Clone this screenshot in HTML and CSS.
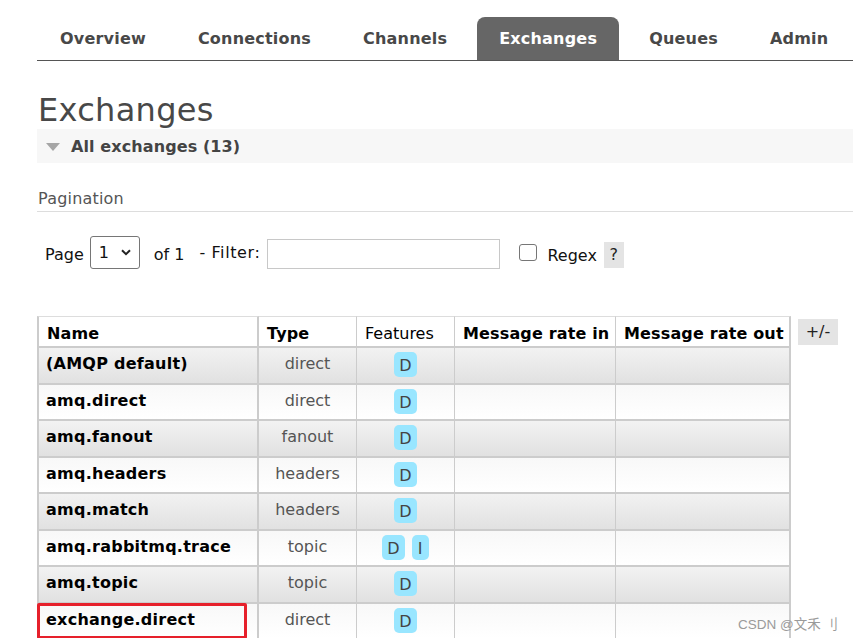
FILE: index.html
```html
<!DOCTYPE html>
<html lang="en">
<head>
<meta charset="utf-8">
<title>Exchanges</title>
<link rel="stylesheet" href="styles.css">
</head>
<body>
<div class="page">
  <ul class="tabs">
    <li class="tab">Overview</li>
    <li class="tab">Connections</li>
    <li class="tab">Channels</li>
    <li class="tab active">Exchanges</li>
    <li class="tab">Queues</li>
    <li class="tab">Admin</li>
  </ul>

  <h1 class="title">Exchanges</h1>

  <div class="section-bar"><span class="tri"></span><span>All exchanges (13)</span></div>

  <h3 class="subhead">Pagination</h3>

  <div class="pager">
    <span class="lbl">Page</span>
    <div class="select"><span class="sel-val">1</span><svg class="chev" width="10" height="7" viewBox="0 0 10 7"><path d="M1 1.2 L5 5.2 L9 1.2" fill="none" stroke="#222" stroke-width="2"/></svg></div>
    <span class="lbl of">of 1</span>
    <span class="lbl filter">- Filter:</span>
    <input class="filter-input" type="text">
    <span class="checkbox"></span>
    <span class="lbl regex">Regex</span>
    <span class="help">?</span>
  </div>

  <div class="table-wrap">
    <table class="list">
      <thead>
        <tr>
          <th class="c-name">Name</th>
          <th class="c-type">Type</th>
          <th class="c-feat plain">Features</th>
          <th class="c-in">Message rate in</th>
          <th class="c-out">Message rate out</th>
        </tr>
      </thead>
      <tbody>
        <tr class="alt1"><td class="name">(AMQP default)</td><td class="type">direct</td><td class="feat"><div class="badges"><span class="badge">D</span></div></td><td></td><td></td></tr>
        <tr class="alt2"><td class="name">amq.direct</td><td class="type">direct</td><td class="feat"><div class="badges"><span class="badge">D</span></div></td><td></td><td></td></tr>
        <tr class="alt1"><td class="name">amq.fanout</td><td class="type">fanout</td><td class="feat"><div class="badges"><span class="badge">D</span></div></td><td></td><td></td></tr>
        <tr class="alt2"><td class="name">amq.headers</td><td class="type">headers</td><td class="feat"><div class="badges"><span class="badge">D</span></div></td><td></td><td></td></tr>
        <tr class="alt1"><td class="name">amq.match</td><td class="type">headers</td><td class="feat"><div class="badges"><span class="badge">D</span></div></td><td></td><td></td></tr>
        <tr class="alt2"><td class="name">amq.rabbitmq.trace</td><td class="type">topic</td><td class="feat"><div class="badges"><span class="badge">D</span><span class="badge">I</span></div></td><td></td><td></td></tr>
        <tr class="alt1"><td class="name">amq.topic</td><td class="type">topic</td><td class="feat"><div class="badges"><span class="badge">D</span></div></td><td></td><td></td></tr>
        <tr class="alt2"><td class="name marked">exchange.direct<span class="mark"></span></td><td class="type">direct</td><td class="feat"><div class="badges"><span class="badge">D</span></div></td><td></td><td></td></tr>
      </tbody>
    </table>
    <span class="toggle">+/-</span>
  </div>
</div>
<div class="watermark">CSDN @文禾 刂</div>
</body>
</html>
```

FILE: styles.css
```css
* { box-sizing: border-box; }

html, body {
  margin: 0;
  padding: 0;
  background: #fff;
}

body {
  font-family: "DejaVu Sans", Verdana, sans-serif;
  font-size: 16px;
  color: #000;
  width: 853px;
  height: 638px;
  overflow: hidden;
  position: relative;
}

.page {
  padding-left: 37px;
}

/* tabs */
.tabs {
  list-style: none;
  margin: 17px 0 0;
  padding: 0 0 0 1px;
  display: flex;
  gap: 8px;
  border-bottom: 1px solid #555;
}

.tab {
  height: 43px;
  line-height: 43px;
  padding: 0 22px;
  font-weight: bold;
  letter-spacing: 0.2px;
  color: #484848;
  border-radius: 8px 8px 0 0;
}

.tab.active {
  background: #666;
  color: #fff;
}

/* title */
.title {
  margin: 31px 0 0 1px;
  font-size: 32px;
  font-weight: normal;
  line-height: 37px;
  letter-spacing: 0.3px;
  color: #484848;
}

.section-bar {
  height: 34px;
  background: #f7f7f7;
  display: flex;
  align-items: center;
  padding-left: 9px;
  font-weight: bold;
  letter-spacing: 0.1px;
  color: #444;
}

.tri {
  width: 0;
  height: 0;
  border-left: 7.5px solid transparent;
  border-right: 7.5px solid transparent;
  border-top: 8px solid #a6a6a6;
  margin-right: 11px;
  margin-top: 1px;
}

.subhead {
  margin: 26px 0 0;
  padding-left: 1px;
  font-size: 16px;
  font-weight: normal;
  line-height: 20px;
  letter-spacing: 0.2px;
  color: #555;
  padding-bottom: 2px;
  border-bottom: 1px solid #ddd;
}

/* pager */
.pager {
  margin-top: 24px;
  display: flex;
  align-items: center;
  padding-left: 8px;
  height: 33px;
}

.lbl {
  color: #111;
  margin-top: 3px;
}

.select {
  margin-left: 6px;
  width: 50px;
  height: 33px;
  border: 1px solid #767676;
  border-radius: 3px;
  display: flex;
  align-items: center;
  padding-left: 8px;
  color: #111;
}

.chev {
  margin-left: auto;
  margin-right: 8px;
}

.of { margin-left: 14px; }
.filter { margin-left: 15px; margin-top: 0; letter-spacing: 0.6px; }

.filter-input {
  margin: 2px 0 0 7px;
  width: 233px;
  height: 30px;
  border: 1px solid #c8c8c8;
  border-radius: 0;
  padding: 0;
  background: #fff;
}

.checkbox {
  margin-left: 19px;
  width: 18px;
  height: 17px;
  border: 1.5px solid #767676;
  border-radius: 3px;
  background: #fff;
}

.regex { margin-left: 10px; margin-top: 6px; }

.help {
  margin: 5px 0 0 7px;
  width: 20px;
  height: 26px;
  line-height: 26px;
  text-align: center;
  background: #e4e4e4;
  color: #222;
}

/* table */
.table-wrap {
  margin-top: 47px;
  display: flex;
  align-items: flex-start;
  gap: 7px;
}

.list {
  border-collapse: separate;
  border-spacing: 0;
  table-layout: fixed;
  width: 754px;
}

.list th {
  height: 32px;
  padding: 5px 8px 0;
  line-height: 24px;
  text-align: left;
  font-weight: bold;
  letter-spacing: 0.15px;
  background: #fff;
  border-top: 1px solid #ddd;
  border-bottom: 2px solid #ccc;
  border-right: 1px solid #ccc;
  white-space: nowrap;
}

.list th.plain { font-weight: normal; letter-spacing: 0; }

.c-name { width: 222px; }
.c-type { width: 98px; }
.c-feat { width: 98px; }
.c-in { width: 161px; }
.c-out { width: 175px; }

.list tbody tr { height: 36.5px; }

.list td {
  padding: 4px 8px 0;
  line-height: 24px;
  vertical-align: top;
  border-bottom: 2px solid #ccc;
  border-right: 1px solid #ccc;
}

.list th:first-child,
.list td:first-child {
  border-left: 2px solid #ccc;
  border-right: 2px solid #ccc;
}

.list th:last-child,
.list td:last-child {
  border-right: 2px solid #ccc;
}

.list tr.alt1 td {
  background: linear-gradient(#f2f2f2, #e1e1e1);
}

.list tr.alt2 td {
  background: linear-gradient(#f8f8f8, #fff);
}

.name {
  font-weight: bold;
  letter-spacing: 0.25px;
  white-space: nowrap;
}

.list td.name { padding-left: 7px; }

.marked { position: relative; }

.mark {
  position: absolute;
  left: -2px;
  top: -1px;
  width: 210px;
  height: 36px;
  border: 3.5px solid #e6202b;
  border-radius: 2px;
}

.type {
  text-align: center;
  color: #555;
}

.badges {
  display: flex;
  justify-content: center;
  gap: 7px;
}

.badge {
  display: inline-block;
  height: 25px;
  min-width: 17px;
  padding: 3px 5px 0;
  line-height: 22px;
  text-align: center;
  background: #99e6ff;
  border-radius: 5px;
  color: #444;
}

.toggle {
  margin-top: 3px;
  width: 40px;
  height: 26px;
  line-height: 26px;
  text-align: center;
  background: #e4e4e4;
  color: #222;
}

.watermark {
  position: absolute;
  right: 15px;
  bottom: 5px;
  font-family: "Liberation Sans", "Noto Sans CJK SC", sans-serif;
  font-size: 13.5px;
  color: #9a9a9a;
}
```
